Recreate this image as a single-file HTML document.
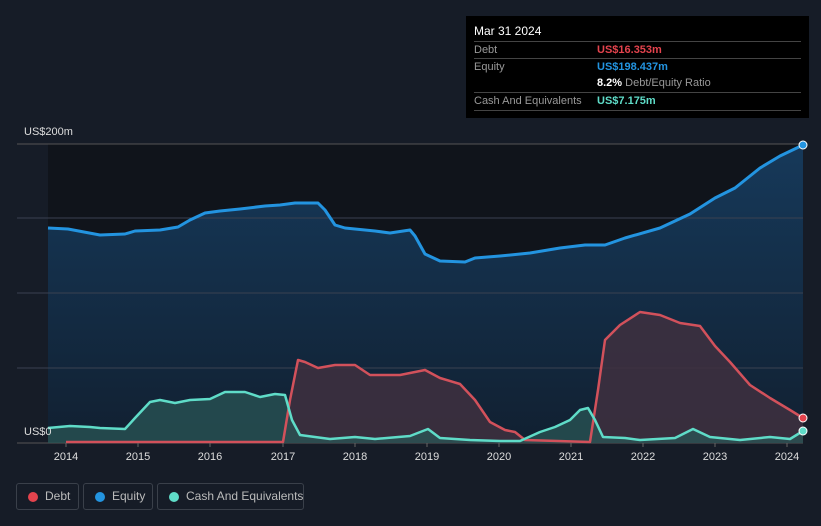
<!DOCTYPE html><html><head><style>
body{margin:0;width:821px;height:526px;background:#161c27;font-family:"Liberation Sans",sans-serif;overflow:hidden;position:relative}
.tt{position:absolute;left:466px;top:16px;width:343px;height:102px;background:#000;font-size:11px;color:#999}
.tt .r{position:absolute;left:8px;right:8px;border-top:1px solid #444;height:17px;line-height:17px}
.lg{position:absolute;top:483px;height:27px;border:1px solid #3a404a;border-radius:3px;color:#bbb;font-size:12px;line-height:25px;box-sizing:border-box;white-space:nowrap}
.lg i{position:absolute;top:8px;width:10px;height:10px;border-radius:50%}
</style></head><body>
<svg width="821" height="526" style="position:absolute;left:0;top:0">
<defs>
<linearGradient id="ge" x1="0" y1="0" x2="0" y2="1"><stop offset="0" stop-color="#16395a"/><stop offset="1" stop-color="#112031"/></linearGradient>
</defs>
<rect x="48" y="144" width="755" height="299" fill="#10141b"/>
<path d="M48,228 L68,229 L100,235 L125,234 L135,231 L160,230 L178,227 L190,220 L205,213 L220,211 L240,209 L265,206 L280,205 L295,203 L318,203 L325,210 L335,225 L345,228 L375,231 L390,233 L410,230 L415,236 L425,254 L440,261 L465,262 L475,258 L500,256 L530,253 L560,248 L585,245 L605,245 L625,238 L660,228 L690,214 L715,198 L735,188 L760,168 L780,156 L803,145 L803,443 L48,443Z" fill="url(#ge)"/>
<g stroke="#3a4150" stroke-width="1"><line x1="17" y1="144" x2="803" y2="144" stroke="#555"/><line x1="17" y1="218" x2="803" y2="218"/><line x1="17" y1="293" x2="803" y2="293"/><line x1="17" y1="368" x2="803" y2="368"/><line x1="17" y1="443" x2="803" y2="443" stroke="#555"/></g>
<path d="M66,442 L283,442 L290,400 L298,360 L305,362 L318,368 L335,365 L355,365 L370,375 L400,375 L425,370 L440,378 L460,384 L475,400 L490,422 L505,430 L515,432 L525,440 L590,442 L598,390 L605,340 L620,325 L640,312 L660,315 L680,323 L700,326 L715,346 L730,362 L750,385 L770,398 L790,410 L803,418 L803,443 L66,443Z" fill="#3f3040" fill-opacity=".85"/>
<path d="M48,428 L70,426 L90,427 L100,428 L125,429 L135,418 L150,402 L160,400 L175,403 L190,400 L210,399 L225,392 L245,392 L260,397 L275,394 L285,395 L292,420 L300,435 L330,439 L355,437 L375,439 L410,436 L428,429 L440,438 L470,440 L500,441 L520,441 L540,432 L555,427 L570,420 L580,410 L588,408 L595,420 L603,437 L625,438 L640,440 L675,438 L693,429 L710,437 L740,440 L770,437 L790,439 L803,431 L803,443 L48,443Z" fill="#2a5656" fill-opacity=".75"/>
<path d="M48,228 L68,229 L100,235 L125,234 L135,231 L160,230 L178,227 L190,220 L205,213 L220,211 L240,209 L265,206 L280,205 L295,203 L318,203 L325,210 L335,225 L345,228 L375,231 L390,233 L410,230 L415,236 L425,254 L440,261 L465,262 L475,258 L500,256 L530,253 L560,248 L585,245 L605,245 L625,238 L660,228 L690,214 L715,198 L735,188 L760,168 L780,156 L803,145" fill="none" stroke="#2394e0" stroke-width="3" stroke-linejoin="round"/>
<path d="M66,442 L283,442 L290,400 L298,360 L305,362 L318,368 L335,365 L355,365 L370,375 L400,375 L425,370 L440,378 L460,384 L475,400 L490,422 L505,430 L515,432 L525,440 L590,442 L598,390 L605,340 L620,325 L640,312 L660,315 L680,323 L700,326 L715,346 L730,362 L750,385 L770,398 L790,410 L803,418" fill="none" stroke="#d2515b" stroke-width="2.5" stroke-linejoin="round"/>
<path d="M48,428 L70,426 L90,427 L100,428 L125,429 L135,418 L150,402 L160,400 L175,403 L190,400 L210,399 L225,392 L245,392 L260,397 L275,394 L285,395 L292,420 L300,435 L330,439 L355,437 L375,439 L410,436 L428,429 L440,438 L470,440 L500,441 L520,441 L540,432 L555,427 L570,420 L580,410 L588,408 L595,420 L603,437 L625,438 L640,440 L675,438 L693,429 L710,437 L740,440 L770,437 L790,439 L803,431" fill="none" stroke="#5fdcc8" stroke-width="2.5" stroke-linejoin="round"/>
<circle cx="803" cy="145" r="4" fill="#2394e0" stroke="#fff" stroke-width="1"/>
<circle cx="803" cy="418" r="4" fill="#e4434d" stroke="#fff" stroke-width="1"/>
<circle cx="803" cy="431" r="4" fill="#5fdcc8" stroke="#fff" stroke-width="1"/>
<g stroke="#666"><line x1="66" y1="443" x2="66" y2="447"/><line x1="138" y1="443" x2="138" y2="447"/><line x1="210" y1="443" x2="210" y2="447"/><line x1="283" y1="443" x2="283" y2="447"/><line x1="355" y1="443" x2="355" y2="447"/><line x1="427" y1="443" x2="427" y2="447"/><line x1="499" y1="443" x2="499" y2="447"/><line x1="571" y1="443" x2="571" y2="447"/><line x1="643" y1="443" x2="643" y2="447"/><line x1="715" y1="443" x2="715" y2="447"/><line x1="787" y1="443" x2="787" y2="447"/></g>
<g fill="#ddd" font-size="11" text-anchor="middle" font-family="Liberation Sans"><text x="66" y="460">2014</text><text x="138" y="460">2015</text><text x="210" y="460">2016</text><text x="283" y="460">2017</text><text x="355" y="460">2018</text><text x="427" y="460">2019</text><text x="499" y="460">2020</text><text x="571" y="460">2021</text><text x="643" y="460">2022</text><text x="715" y="460">2023</text><text x="787" y="460">2024</text></g>
<text x="24" y="135" fill="#ddd" font-size="11" font-family="Liberation Sans">US$200m</text>
<text x="24" y="435" fill="#ddd" font-size="11" font-family="Liberation Sans">US$0</text>
</svg>
<div class="tt">
<div style="position:absolute;left:8px;top:8px;color:#fff;font-size:12px">Mar 31 2024</div>
<div class="r" style="top:25px">Debt<span style="position:absolute;left:123px;color:#e4434d;font-weight:bold">US$16.353m</span></div>
<div class="r" style="top:42px">Equity<span style="position:absolute;left:123px;color:#2394e0;font-weight:bold">US$198.437m</span></div>
<div class="r" style="top:59px;border:0"><span style="position:absolute;left:123px"><b style="color:#fff">8.2%</b> Debt/Equity Ratio</span></div>
<div class="r" style="top:76px">Cash And Equivalents<span style="position:absolute;left:123px;color:#5fdcc8;font-weight:bold">US$7.175m</span></div>
<div class="r" style="top:94px;height:0"></div>
</div>
<div class="lg" style="left:16px;width:63px"><i style="left:11px;background:#e4434d"></i><span style="position:absolute;left:28px">Debt</span></div>
<div class="lg" style="left:83px;width:70px"><i style="left:11px;background:#2394e0"></i><span style="position:absolute;left:28px">Equity</span></div>
<div class="lg" style="left:157px;width:147px"><i style="left:11px;background:#5fdcc8"></i><span style="position:absolute;left:28px">Cash And Equivalents</span></div>
</body></html>
